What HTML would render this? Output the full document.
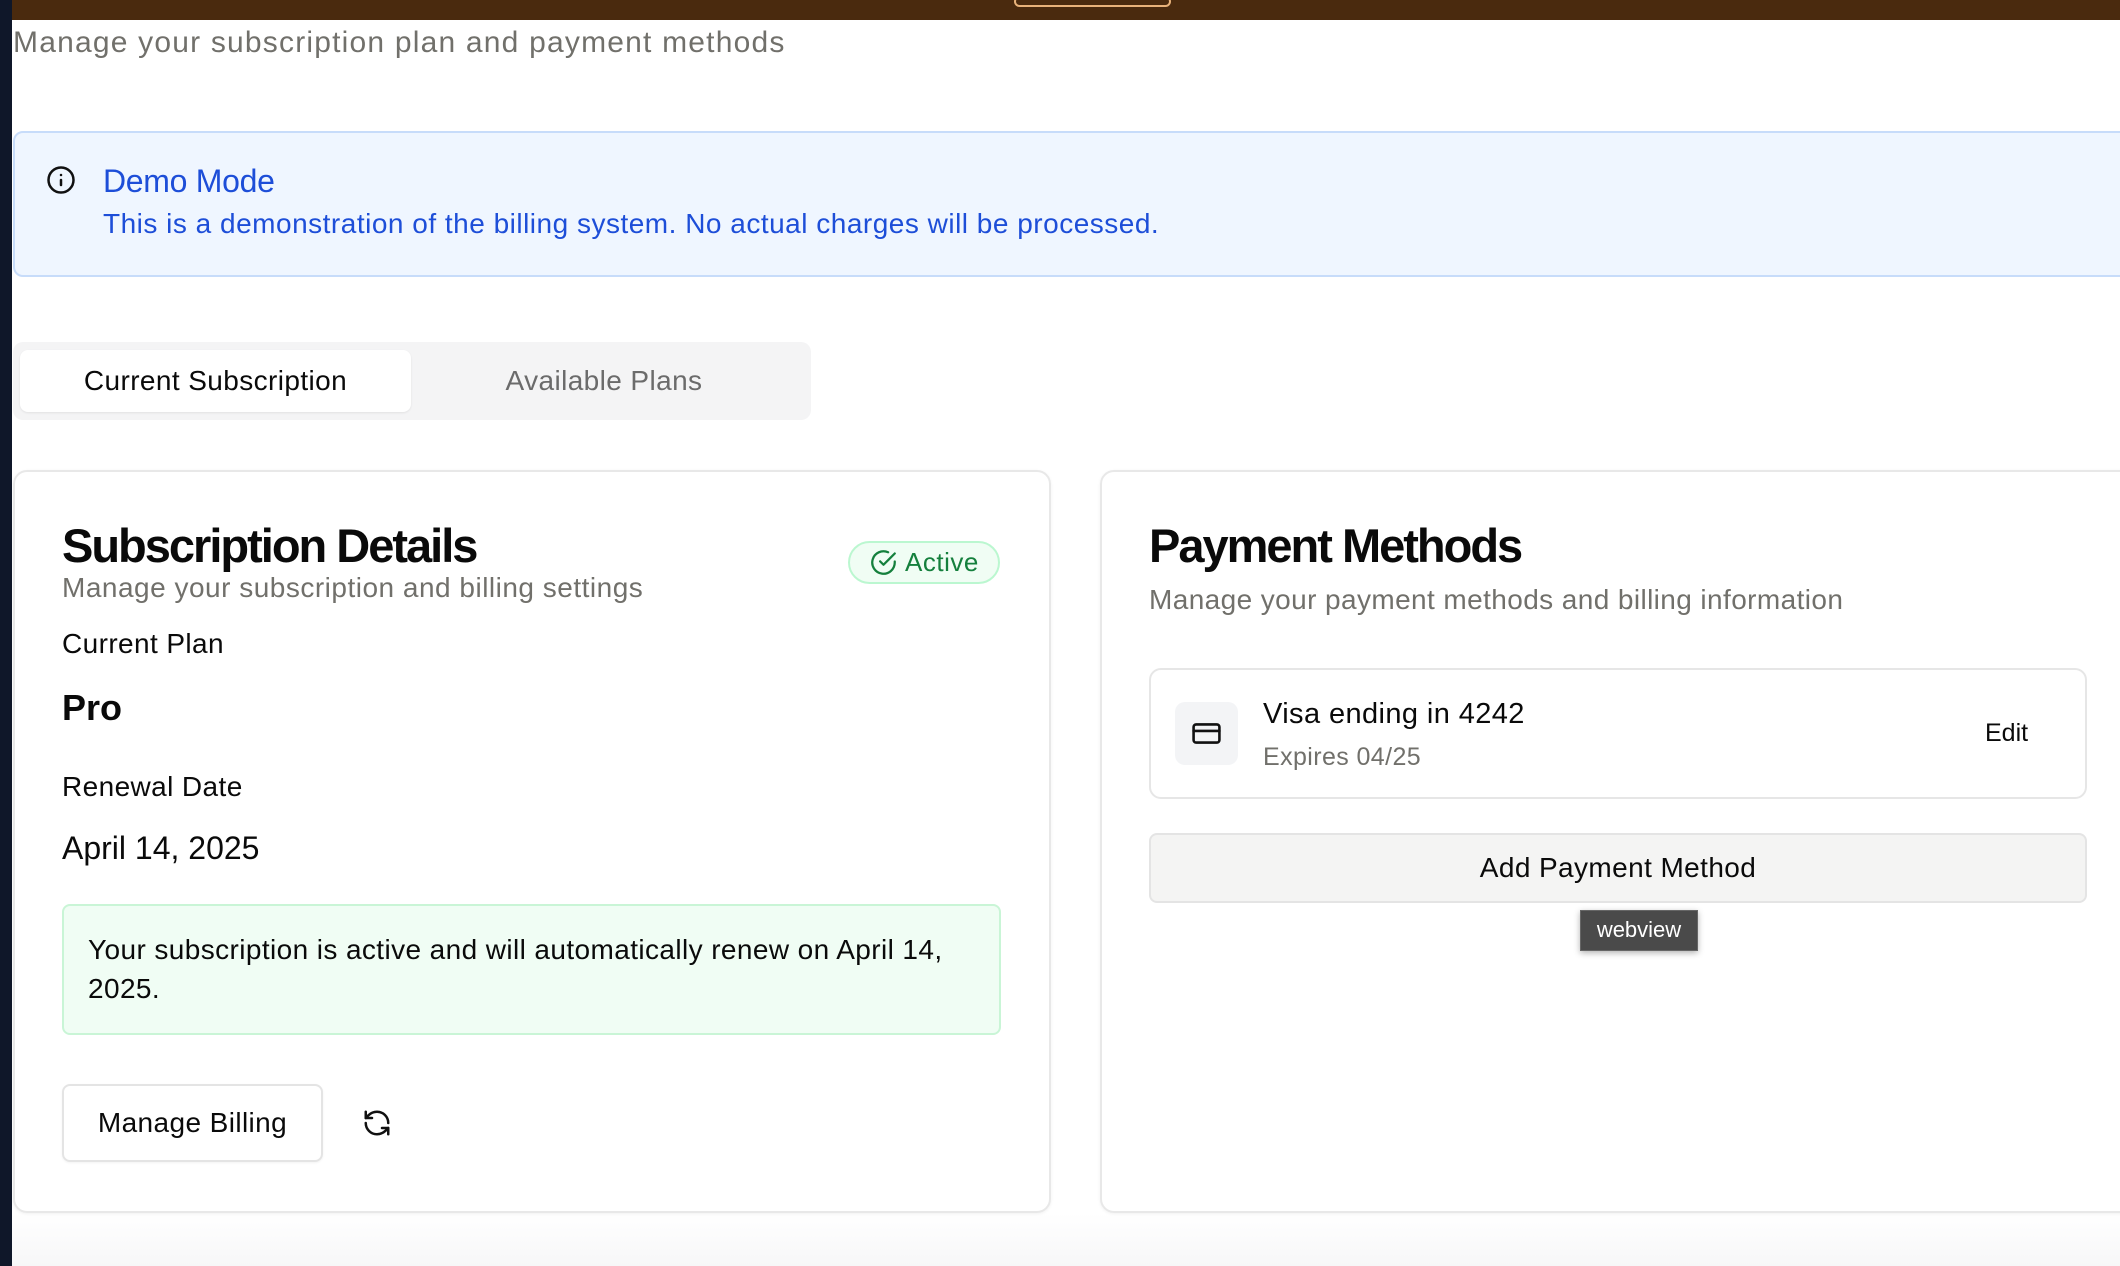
<!DOCTYPE html>
<html><head><meta charset="utf-8"><style>
*{box-sizing:border-box;margin:0;padding:0}
body{width:2120px;height:1266px;overflow:hidden;background:#fff;font-family:"Liberation Sans",sans-serif;position:relative;color:#0a0a0a}
.abs{position:absolute}
.t{position:absolute;white-space:nowrap;line-height:1}
</style></head><body>
<div class="abs" style="left:0;top:0;width:2120px;height:20px;background:#4a2a0e"></div>
<div class="abs" style="left:1014px;top:-4px;width:157px;height:11px;border:2px solid #e8b27a;border-radius:6px"></div>
<div class="abs" style="left:0;top:0;width:12px;height:1266px;background:#0f1729"></div>
<div class="abs" style="left:12px;top:1213px;width:2108px;height:53px;background:linear-gradient(#fff,#f7f7f8)"></div>

<div class="t" style="left:13px;top:28px;font-size:30px;letter-spacing:1.2px;color:#71706b">Manage your subscription plan and payment methods</div>

<div class="abs" style="left:13px;top:131px;width:2130px;height:146px;background:#eff6ff;border:2px solid #c7dcfa;border-radius:10px"></div>
<svg class="abs" style="left:46px;top:165px" width="30" height="30" viewBox="0 0 24 24" fill="none" stroke="#111" stroke-width="2" stroke-linecap="round"><circle cx="12" cy="12" r="10"/><path d="M12 16v-4M12 8h.01"/></svg>
<div class="t" style="left:103px;top:165px;font-size:32px;color:#1d4ed8;letter-spacing:-0.3px">Demo Mode</div>
<div class="t" style="left:103px;top:210px;font-size:28px;color:#1d4ed8;letter-spacing:0.5px">This is a demonstration of the billing system. No actual charges will be processed.</div>

<div class="abs" style="left:13px;top:342px;width:798px;height:78px;background:#f4f4f5;border-radius:10px"></div>
<div class="abs" style="left:20px;top:350px;width:391px;height:62px;background:#fff;border-radius:8px;box-shadow:0 1px 2px rgba(0,0,0,.08)"></div>
<div class="t" style="left:20px;top:367px;width:391px;text-align:center;font-size:28px;letter-spacing:0.4px;color:#0a0a0a">Current Subscription</div>
<div class="t" style="left:404px;top:367px;width:400px;text-align:center;font-size:28px;letter-spacing:0.4px;color:#6b6b6b">Available Plans</div>

<div class="abs" style="left:13px;top:470px;width:1038px;height:743px;border:2px solid #e8e8e8;border-radius:14px;box-shadow:0 1px 3px rgba(0,0,0,.06)"></div>
<div class="t" style="left:62px;top:522px;font-size:47px;font-weight:bold;letter-spacing:-2px">Subscription Details</div>
<div class="t" style="left:62px;top:574px;font-size:28px;letter-spacing:0.5px;color:#71706b">Manage your subscription and billing settings</div>
<div class="abs" style="left:848px;top:541px;width:152px;height:43px;background:#f0fdf4;border:2px solid #bbf7d0;border-radius:22px"></div>
<svg class="abs" style="left:870px;top:549px" width="27" height="27" viewBox="0 0 24 24" fill="none" stroke="#15803d" stroke-width="2" stroke-linecap="round" stroke-linejoin="round"><path d="M22 11.1V12a10 10 0 1 1-5.9-9.1"/><path d="M22 4 12 14l-3-3"/></svg>
<div class="t" style="left:905px;top:549px;font-size:26px;letter-spacing:0.5px;color:#15803d">Active</div>
<div class="t" style="left:62px;top:630px;font-size:28px;letter-spacing:0.4px">Current Plan</div>
<div class="t" style="left:62px;top:690px;font-size:36px;font-weight:bold">Pro</div>
<div class="t" style="left:62px;top:773px;font-size:28px;letter-spacing:0.4px">Renewal Date</div>
<div class="t" style="left:62px;top:832px;font-size:32px">April 14, 2025</div>
<div class="abs" style="left:62px;top:904px;width:939px;height:131px;background:#f0fdf4;border:2px solid #c9f5d6;border-radius:8px"></div>
<div class="abs" style="left:88px;top:930px;width:900px;font-size:28px;line-height:39px;letter-spacing:0.4px">Your subscription is active and will automatically renew on April 14, 2025.</div>
<div class="abs" style="left:62px;top:1084px;width:261px;height:78px;border:2px solid #e4e4e4;border-radius:8px;box-shadow:0 1px 2px rgba(0,0,0,.05)"></div>
<div class="t" style="left:62px;top:1109px;width:261px;text-align:center;font-size:28px;letter-spacing:0.4px">Manage Billing</div>
<svg class="abs" style="left:362px;top:1108px" width="30" height="30" viewBox="0 0 24 24" fill="none" stroke="#111" stroke-width="2" stroke-linecap="round" stroke-linejoin="round"><path d="M21 12a9 9 0 0 0-9-9 9.75 9.75 0 0 0-6.74 2.74L3 8"/><path d="M3 3v5h5"/><path d="M3 12a9 9 0 0 0 9 9 9.75 9.75 0 0 0 6.74-2.74L21 16"/><path d="M16 16h5v5"/></svg>

<div class="abs" style="left:1100px;top:470px;width:1060px;height:743px;border:2px solid #e8e8e8;border-radius:14px;box-shadow:0 1px 3px rgba(0,0,0,.06)"></div>
<div class="t" style="left:1149px;top:522px;font-size:47px;font-weight:bold;letter-spacing:-2px">Payment Methods</div>
<div class="t" style="left:1149px;top:586px;font-size:28px;letter-spacing:0.4px;color:#71706b">Manage your payment methods and billing information</div>
<div class="abs" style="left:1149px;top:668px;width:938px;height:131px;border:2px solid #e6e6e6;border-radius:12px"></div>
<div class="abs" style="left:1175px;top:702px;width:63px;height:63px;background:#f3f4f6;border-radius:10px"></div>
<svg class="abs" style="left:1191px;top:718px" width="31" height="31" viewBox="0 0 24 24" fill="none" stroke="#111" stroke-width="2" stroke-linecap="round"><rect x="2" y="5" width="20" height="14" rx="2"/><path d="M2 10h20"/></svg>
<div class="t" style="left:1263px;top:700px;font-size:29px;letter-spacing:0.4px">Visa ending in 4242</div>
<div class="t" style="left:1263px;top:745px;font-size:25px;letter-spacing:0.4px;color:#71706b">Expires 04/25</div>
<div class="t" style="left:1985px;top:721px;font-size:25px">Edit</div>
<div class="abs" style="left:1149px;top:833px;width:938px;height:70px;background:#f4f4f3;border:2px solid #e4e4e4;border-radius:8px"></div>
<div class="t" style="left:1149px;top:854px;width:938px;text-align:center;font-size:28px;letter-spacing:0.4px">Add Payment Method</div>
<div class="abs" style="left:1580px;top:910px;width:118px;height:41px;background:#4a4a4a;border:1px solid #666;box-shadow:0 2px 6px rgba(0,0,0,.3)"></div>
<div class="t" style="left:1580px;top:919px;width:118px;text-align:center;font-size:22px;color:#fff">webview</div>
</body></html>
